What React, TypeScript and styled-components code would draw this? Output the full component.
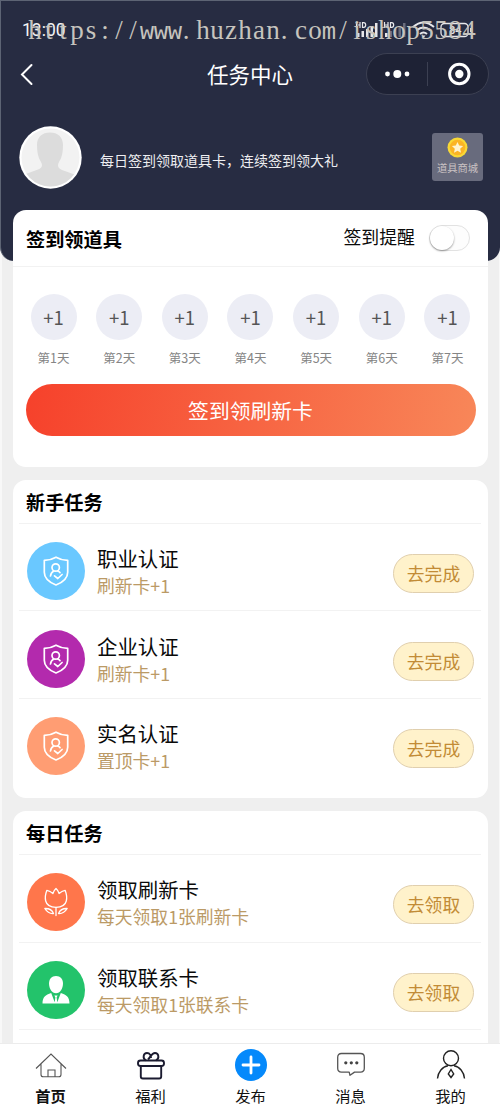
import React from "react";
import styled, { createGlobalStyle } from "styled-components";

const GlobalStyle = createGlobalStyle`
  * { box-sizing: border-box; }
  body {
    margin: 0;
    background: #efefef;
    font-family: "Noto Sans CJK SC", "Noto Sans", sans-serif;
    color: #0a0a0a;
  }
`;

const Screen = styled.div`
  position: relative;
  width: 500px;
  height: 1111px;
  display: flex;
  flex-direction: column;
  overflow: hidden;
  background: #efefef;
  box-shadow: inset 2px 0 #f8f8f8, inset -1px 0 #f8f8f8;
`;

const Hero = styled.header`
  flex: none;
  height: 261px;
  background: #272c42;
  border-top: 1px solid #5d6474;
  border-left: 1px solid #5d6474;
  border-radius: 0 0 14px 14px;
  color: #fff;
`;

const StatusBar = styled.div`
  height: 52px;
  padding: 6px 27px 0 21px;
  display: flex;
  align-items: center;
  justify-content: space-between;
`;

const Clock = styled.span`
  font: 400 17.5px/20px Roboto, sans-serif;
  color: #f3f3f5;
`;

const Watermark = styled.svg`
  position: absolute;
  left: 0;
  top: 12px;
`;

const NavBar = styled.div`
  height: 42px;
  display: grid;
  grid-template-columns: 123px 1fr 123px;
  align-items: center;
  padding: 0 11px 0 10px;
`;

const BackIcon = styled.svg`
  margin-left: 7px;
`;

const NavTitle = styled.h1`
  margin: 0 0 1px;
  text-align: center;
  font-size: 21.5px;
  line-height: 30px;
  font-weight: 400;
`;

const Capsule = styled.div`
  height: 42px;
  display: flex;
  align-items: center;
  border: 1px solid #3c4052;
  border-radius: 21px;
  background: #1e2235;
`;

const Profile = styled.div`
  height: 124px;
  display: flex;
  align-items: center;
  padding: 0 17px 0 17.5px;
`;

const Avatar = styled.svg`
  flex: none;
  margin-right: 18.5px;
`;

const Slogan = styled.p`
  margin: 6px 0 0;
  flex: 1;
  font-size: 14px;
  line-height: 20px;
  color: #eeeef1;
`;

const Mall = styled.div`
  width: 51px;
  height: 48px;
  border-radius: 3px;
  background: #686b7d;
  display: flex;
  flex-direction: column;
  align-items: center;
  padding-top: 4px;
  font-size: 10.3px;
  line-height: 15px;
  color: #cbc3c4;
  gap: 2px;
  white-space: nowrap;
`;

const Content = styled.main`
  flex: 1;
  min-height: 0;
  margin-top: -51px;
  padding: 0 12px 0 13px;
  overflow: hidden;
  display: flex;
  flex-direction: column;
`;

const Card = styled.section<{ $h: number; $gap?: number }>`
  flex: none;
  height: ${(p) => p.$h}px;
  margin-bottom: ${(p) => p.$gap ?? 0}px;
  border-radius: 13px;
  background: #fff;
`;

const CheckinHead = styled.div`
  height: 57px;
  padding: 1px 18px 0 13px;
  display: flex;
  align-items: center;
  border-bottom: 1px solid #f2f2f2;
`;

const CardTitle = styled.h2`
  margin: 0;
  flex: 1;
  font-size: 19.2px;
  line-height: 28px;
  font-weight: 700;
  color: #000;
`;

const RemindLabel = styled.span`
  font-size: 17.9px;
  line-height: 26px;
  margin: 0 14px 5px 0;
`;

const Switch = styled.span`
  width: 41px;
  height: 26px;
  margin-bottom: 1px;
  border: 1px solid #e2e2e2;
  border-radius: 13px;
  background: #fdfdfd;
`;

const Knob = styled.span`
  display: block;
  width: 24px;
  height: 24px;
  border-radius: 50%;
  background: #fff;
  box-shadow: 0 1px 2px rgba(0, 0, 0, 0.4);
`;

const Days = styled.div`
  display: flex;
  justify-content: space-between;
  padding: 26.5px 17.5px 0;
`;

const Day = styled.div`
  width: 46px;
  display: flex;
  flex-direction: column;
  align-items: center;
  gap: 8px;
  font-size: 12.5px;
  line-height: 20px;
  color: #858585;
`;

const Bonus = styled.div`
  width: 46px;
  height: 46px;
  border-radius: 50%;
  background: #ecedf5;
  font-size: 18.5px;
  line-height: 46px;
  text-align: center;
  color: #555;
`;

const CheckinButton = styled.button`
  display: block;
  width: 450px;
  height: 52px;
  margin: 16px 0 0 13px;
  padding: 0 1px 0 0;
  border: 0;
  border-radius: 26px;
  background: linear-gradient(100deg, #f6412b, #f88759);
  color: #fff;
  font: 20.8px/52px "Noto Sans CJK SC", sans-serif;
`;

const TaskHead = styled.div`
  height: 44px;
  margin: 0 7px 0 6px;
  padding: 1px 7px 0;
  display: flex;
  align-items: center;
  border-bottom: 1px solid #f2f2f2;
`;

const TaskRow = styled.div<{ $last?: boolean }>`
  height: 87.7px;
  margin: 0 7px 0 6px;
  padding: 8px 7px 0 8px;
  display: flex;
  align-items: center;
  border-bottom: 1px solid ${(p) => (p.$last ? "transparent" : "#f2f2f2")};
`;

const TaskIcon = styled.div<{ $bg: string }>`
  width: 58px;
  height: 58px;
  flex: none;
  border-radius: 50%;
  background: ${(p) => p.$bg};
  display: grid;
  place-items: center;
`;

const TaskText = styled.div`
  flex: 1;
  margin-left: 12px;
`;

const TaskName = styled.div`
  font-size: 20.4px;
  line-height: 28px;
  color: #0a0a0a;
`;

const TaskReward = styled.div`
  font-size: 17.8px;
  line-height: 26px;
  color: #bb9a66;
`;

const TaskButton = styled.button`
  width: 81px;
  height: 39px;
  margin-top: 5px;
  padding: 0;
  border: 1px solid #e0cfae;
  border-radius: 20px;
  background: #fff2cb;
  color: #c28b36;
  font: 17.8px/37px "Noto Sans CJK SC", sans-serif;
`;

const TabBar = styled.nav`
  flex: none;
  height: 68px;
  display: grid;
  grid-template-columns: repeat(5, 1fr);
  background: #fff;
  border-top: 1px solid #ececec;
`;

const Tab = styled.div<{ $active?: boolean }>`
  display: flex;
  flex-direction: column;
  align-items: center;
  padding: 4px 0 0 1px;
  gap: 2px;
  font-size: 15.3px;
  line-height: 22px;
  font-weight: ${(p) => (p.$active ? 700 : 400)};
  color: #111;
`;

const StatusIcons = () => (
  <svg width="118" height="20" viewBox="0 0 118 20" fill="#e7e7ea">
    <path d="M1.500 2v6M5 2v6M1.500 5H5M7.500 2.600v4.800h1.200q2 0 2-2.400t-2-2.400zM29.500 2v6M33 2v6M29.500 5H33M35.500 2.600v4.800h1.200q2 0 2-2.400t-2-2.400z" fill="none" stroke="#e7e7ea" strokeWidth="1.200" />
    <path d="M2 13h2.500v4H2zM6.500 11h2.500v6H6.500zM11 9h2.500v8H11zM15.500 6h2.500v11h-2.500zM20 3h2.500v14H20z" />
    <path d="M30 13h2.500v4H30z" />
    <path opacity=".35" d="M34.500 11h2.500v6h-2.500zM39 9h2.500v8H39zM43.500 6h2.500v11h-2.500zM48 3h2.500v14H48z" />
    <g fill="none" stroke="#e7e7ea" strokeWidth="2">
      <path d="M58 7q10.500-9 21 0M61.500 10.500q7-6 14 0M65 14q3.500-3 7 0" />
      <rect x="86" y="3.500" width="27" height="13" rx="3.500" strokeWidth="1.300" />
    </g>
    <path d="M66.500 15.500l2 2.500 2-2.500zM115 8h1.500v4H115z" />
    <text x="94" y="14" fontFamily="Roboto, sans-serif" fontWeight="500" fontSize="11">84</text>
  </svg>
);

const siteUrl = "https://www.huzhan.com/ishop5584";

/* Every glyph is centred in a 14px cell; dots sit in the left half of theirs. */
const cellCentres = [...siteUrl].map((c, i) => 35 + i * 14 - (c === "." ? 3 : 0));

const SiteMark = () => (
  <Watermark width="500" height="36" viewBox="0 0 500 36">
    <text
      x={cellCentres.join(" ")}
      y="27"
      textAnchor="middle"
      fontFamily="'Liberation Serif', serif"
      fontSize="27"
      fill="#c6c4be"
    >
      {siteUrl.split(/(w+|m)/).map((part, i) =>
        /^(w+|m)$/.test(part) ? (
          <tspan key={i} fontFamily="'Liberation Mono', monospace" fontSize="24">{part}</tspan>
        ) : (
          part
        )
      )}
    </text>
  </Watermark>
);

const ShieldIcon = () => (
  <svg width="28" height="32" viewBox="0 0 28 32" fill="none" stroke="#fff" strokeWidth="1.700" strokeLinecap="round" strokeLinejoin="round">
    <path d="M14 2.200c3.700 2.200 7 3 11.700 3.200v11.800c0 6-4.700 10-11.700 12.800C7 27.200 2.300 23.200 2.300 17.200V5.400C7 5.200 10.300 4.400 14 2.200z" />
    <circle cx="13.700" cy="12.500" r="3.700" />
    <path d="M8.500 21c.3-2.500 1.500-4 3.300-4.900M15.800 16c1 .4 1.700 1 2.200 1.600M12.500 20.800l3.300 2.700 4.300-4" />
  </svg>
);

const TulipIcon = () => (
  <svg width="26" height="32" viewBox="0 0 26 32" fill="none" stroke="#fff" strokeWidth="1.300" strokeLinecap="round" strokeLinejoin="round">
    <path d="M13 2.500c1.500 1.300 2.500 3 3.100 5 1.700-1.600 3.700-2.700 6-3.200 1.600 4 2 7.500 1.200 10.700C22.300 19 18.500 21.300 13 21.300S3.700 19 2.700 15C1.900 11.800 2.300 8.300 3.900 4.300c2.300.5 4.300 1.600 6 3.200.6-2 1.600-3.700 3.100-5z" />
    <path d="M13 21.300v8.200M1.800 22.500c4-.2 7.200 1.300 8.700 5-3.500.3-6.500-1.500-8.700-5zM24.200 22.500c-4-.2-7.200 1.300-8.700 5 3.500.3 6.500-1.500 8.700-5z" />
  </svg>
);

const AgentIcon = () => (
  <svg width="28" height="30" viewBox="0 0 28 30" fill="#fff">
    <path d="M14 1c4.400 0 7 3 7 7.500 0 4.800-2.800 9.800-7 9.800S7 13.300 7 8.500C7 4 9.600 1 14 1z" />
    <path d="M.5 28.500c0-6.500 3-8.500 8.700-10.500l3.500 9.300.7-4.800-1-2h3.200l-1 2 .7 4.800L18.800 18c5.700 2 8.700 4 8.700 10.500z" />
  </svg>
);

const HomeIcon = () => (
  <svg width="32" height="34" viewBox="0 0 32 34" fill="none" stroke="#555" strokeWidth="1.100">
    <path d="M1 20.500L16 6l15 14.500M6 16v10.500q0 2.300 2.300 2.300h15.400q2.300 0 2.300-2.300V16M13 28.500V22h7v6.500" />
  </svg>
);

const GiftIcon = () => (
  <svg width="30" height="34" viewBox="0 0 30 34" fill="none" stroke="#1b1b30" strokeWidth="1.900" strokeLinejoin="round">
    <rect x="2" y="12.500" width="26" height="5.500" rx="2.500" />
    <path d="M4.800 18v10.500q0 2 2 2h16.400q2 0 2-2V18M10 12.500C6 10 7.500 5 11 5c3 0 4 3 4 5M20 12.500C24 10 22.500 5 19 5c-3.500 0-4 3.500-7 6.500" />
  </svg>
);

const PublishIcon = () => (
  <svg width="34" height="34" viewBox="0 0 34 34">
    <circle cx="17" cy="17" r="16" fill="#0589fb" />
    <path d="M17 9v16M9 17h16" stroke="#fff" strokeWidth="2.800" strokeLinecap="round" />
  </svg>
);

const ChatIcon = () => (
  <svg width="30" height="34" viewBox="0 0 30 34" fill="none" stroke="#555" strokeWidth="1.300" strokeLinejoin="round">
    <path d="M5.500 5.500h19q3.800 0 3.800 3.800v11q0 3.800-3.800 3.800h-6l-4.500 3.200-.8-3.200H5.500q-3.800 0-3.800-3.800v-11q0-3.800 3.800-3.800z" />
    <g fill="#444" stroke="none">
      <circle cx="9.800" cy="14.800" r="1.600" />
      <circle cx="15.300" cy="14.800" r="1.600" />
      <circle cx="20.800" cy="14.800" r="1.600" />
    </g>
  </svg>
);

const MineIcon = () => (
  <svg width="30" height="34" viewBox="0 0 30 34" fill="none" stroke="#222" strokeWidth="1.400">
    <circle cx="15" cy="10.300" r="7.500" />
    <path d="M1.500 30.500C2 24 6.500 18.500 12 17.700M28.500 30.500C28 24 23.500 18.500 18 17.700M15 21.500l2.700 4.500-2.700 3.500-2.700-3.500z" />
  </svg>
);

interface Task {
  name: string;
  reward: string;
  action: string;
  color: string;
  icon: React.ReactNode;
}

const starterTasks: Task[] = [
  { name: "职业认证", reward: "刷新卡+1", action: "去完成", color: "#6ac8ff", icon: <ShieldIcon /> },
  { name: "企业认证", reward: "刷新卡+1", action: "去完成", color: "#b32aad", icon: <ShieldIcon /> },
  { name: "实名认证", reward: "置顶卡+1", action: "去完成", color: "#ff9d73", icon: <ShieldIcon /> },
];

const dailyTasks: Task[] = [
  { name: "领取刷新卡", reward: "每天领取1张刷新卡", action: "去领取", color: "#ff764b", icon: <TulipIcon /> },
  { name: "领取联系卡", reward: "每天领取1张联系卡", action: "去领取", color: "#23c36b", icon: <AgentIcon /> },
];

const tabs = [
  { label: "首页", icon: <HomeIcon />, active: true },
  { label: "福利", icon: <GiftIcon /> },
  { label: "发布", icon: <PublishIcon /> },
  { label: "消息", icon: <ChatIcon /> },
  { label: "我的", icon: <MineIcon /> },
];

const TaskItem = ({ task, last }: { task: Task; last?: boolean }) => (
  <TaskRow $last={last}>
    <TaskIcon $bg={task.color}>{task.icon}</TaskIcon>
    <TaskText>
      <TaskName>{task.name}</TaskName>
      <TaskReward>{task.reward}</TaskReward>
    </TaskText>
    <TaskButton>{task.action}</TaskButton>
  </TaskRow>
);

export default function App() {
  return (
    <Screen>
      <GlobalStyle />
      <Hero>
        <StatusBar>
          <Clock>13:00</Clock>
          <StatusIcons />
        </StatusBar>
        <NavBar>
          <BackIcon width="16" height="24" viewBox="0 0 16 24" fill="none" stroke="#fff" strokeWidth="2" strokeLinecap="round">
            <path d="M13.500 3L4 12.500 13.500 22" />
          </BackIcon>
          <NavTitle>任务中心</NavTitle>
          <Capsule>
            <svg width="121" height="40" viewBox="0 0 121 40" fill="#fff">
              <circle cx="20.500" cy="20" r="2.400" />
              <circle cx="30.300" cy="20" r="4" />
              <circle cx="40" cy="20" r="2.400" />
              <path d="M60.500 8v24" stroke="#3c4052" />
              <circle cx="92.300" cy="20" r="9.700" fill="none" stroke="#fff" strokeWidth="3" />
              <circle cx="92.300" cy="20" r="4.200" />
            </svg>
          </Capsule>
        </NavBar>
        <Profile>
          <Avatar width="63" height="63" viewBox="0 0 63 63">
            <circle cx="31.500" cy="31.500" r="31.200" fill="#fff" />
            <clipPath id="face"><circle cx="31.500" cy="31.500" r="29" /></clipPath>
            <g clipPath="url(#face)">
              <rect width="63" height="63" fill="#f2f2f2" />
              <path fill="#dcdcdc" d="M31 6.500c8 0 13 4.800 13 12.500 0 7-1 12.500-4 17-2 4-1 6 3 8l14 5v14H4V49l15-5.500c4-1.500 5-4 3-7.500-3-4.500-4-10-4-17 0-7.700 5-12.500 13-12.500z" />
            </g>
          </Avatar>
          <Slogan>每日签到领取道具卡，连续签到领大礼</Slogan>
          <Mall>
            <svg width="21" height="21" viewBox="0 0 21 21">
              <circle cx="10.500" cy="10.500" r="10" fill="#f9d936" />
              <circle cx="10.500" cy="10.500" r="7.800" fill="#fbb425" />
              <path fill="#fff3cf" d="M10.500 5l1.700 3.600 3.900.5-2.900 2.700.8 3.900-3.500-1.900L7 15.700l.8-3.900-2.900-2.700 3.900-.5z" />
            </svg>
            道具商城
          </Mall>
        </Profile>
      </Hero>
      <Content>
        <Card $h={257} $gap={12.5}>
          <CheckinHead>
            <CardTitle>签到领道具</CardTitle>
            <RemindLabel>签到提醒</RemindLabel>
            <Switch><Knob /></Switch>
          </CheckinHead>
          <Days>
            {[1, 2, 3, 4, 5, 6, 7].map((n) => (
              <Day key={n}>
                <Bonus>+1</Bonus>
                <span>第{n}天</span>
              </Day>
            ))}
          </Days>
          <CheckinButton>签到领刷新卡</CheckinButton>
        </Card>
        <Card $h={318.5} $gap={13}>
          <TaskHead><CardTitle>新手任务</CardTitle></TaskHead>
          {starterTasks.map((t, i) => (
            <TaskItem key={t.name} task={t} last={i === starterTasks.length - 1} />
          ))}
        </Card>
        <Card $h={320}>
          <TaskHead><CardTitle>每日任务</CardTitle></TaskHead>
          {dailyTasks.map((t) => (
            <TaskItem key={t.name} task={t} />
          ))}
        </Card>
      </Content>
      <TabBar>
        {tabs.map((t) => (
          <Tab key={t.label} $active={t.active}>
            {t.icon}
            {t.label}
          </Tab>
        ))}
      </TabBar>
      <SiteMark />
    </Screen>
  );
}
